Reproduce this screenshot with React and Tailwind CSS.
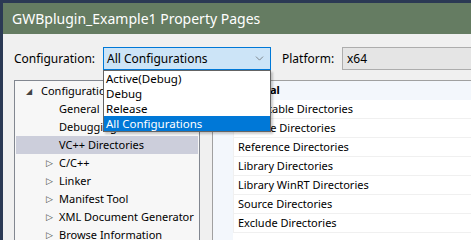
import { ChevronDown } from "lucide-react";

const treeItems = [
  { label: "General" },
  { label: "Debugging" },
  { label: "VC++ Directories", selected: true },
  { label: "C/C++", arrow: true },
  { label: "Linker", arrow: true },
  { label: "Manifest Tool", arrow: true },
  { label: "XML Document Generator", arrow: true },
  { label: "Browse Information", arrow: true },
];

const gridRows = [
  "Executable Directories",
  "Include Directories",
  "Reference Directories",
  "Library Directories",
  "Library WinRT Directories",
  "Source Directories",
  "Exclude Directories",
];

const configOptions = ["Active(Debug)", "Debug", "Release", "All Configurations"];

const App = () => {
  return (
    <div
      className="w-[471px] h-[240px] overflow-hidden flex bg-[#2b3954] text-[11px] text-black"
      style={{ fontFamily: '"Noto Sans", "Open Sans", sans-serif' }}
    >
      <div className="w-[3px] shrink-0" />
      <div className="flex-1 flex flex-col min-w-0">
        <div className="h-[3px] shrink-0" />
        {/* title bar */}
        <div className="h-[31px] shrink-0 bg-[#657c62] flex items-center pl-[9px] text-white text-[14px]">
          GWBplugin_Example1 Property Pages
        </div>

        {/* body */}
        <div className="flex-1 bg-[#f0f0f0] pt-[13px] pl-[11px] flex flex-col">
          <div className="flex items-center h-[23px]">
            <p className="w-[89px] shrink-0 text-[12px]">Configuration:</p>
            <div className="relative w-[168px] shrink-0">
              <div className="h-[23px] border border-[#0078d7] bg-[#cce4f7] flex items-center justify-between pl-[3px] pr-[4px] text-[12px]">
                <span>All Configurations</span>
                <ChevronDown size={13} strokeWidth={1.2} className="text-[#555]" />
              </div>
              <div className="absolute left-0 top-full w-full z-10 bg-white border border-[#646464] shadow-[2px_2px_2px_rgba(0,0,0,0.2)] text-[11.5px]">
                {configOptions.map((o, i) => (
                  <div
                    key={o}
                    className={`h-[15px] leading-[15px] pl-[2px] ${
                      i === configOptions.length - 1 ? "bg-[#0078d7] text-white" : ""
                    }`}
                  >
                    {o}
                  </div>
                ))}
              </div>
            </div>
            <p className="ml-[11px] w-[60px] shrink-0 text-[12px]">Platform:</p>
            <div className="h-[23px] w-[140px] shrink-0 border border-[#adadad] bg-[#e5e5e5] flex items-center pl-[4px] text-[12px]">
              x64
            </div>
          </div>

          <div className="mt-[10px] flex flex-1 min-h-0">
            {/* tree */}
            <div className="w-[186px] shrink-0 border border-[#828790] bg-[#f7f7f7] pt-[1px] px-[1px] overflow-hidden">
              <div className="h-[18px] flex items-center whitespace-nowrap">
                <span className="w-[25px] pl-[10px] text-[8px] text-[#444]">◢</span>
                <span>Configuration Properties</span>
              </div>
              {treeItems.map((t) => (
                <div
                  key={t.label}
                  className={`h-[18px] flex items-center whitespace-nowrap ${
                    t.selected ? "bg-[#cccedb]" : ""
                  }`}
                >
                  <span className="w-[43px] pl-[30px] text-[9px] text-[#444]">
                    {t.arrow ? "▷" : ""}
                  </span>
                  <span>{t.label}</span>
                </div>
              ))}
            </div>

            {/* property grid */}
            <div className="ml-[12px] flex-1 border-l border-t border-[#a0a0a0] bg-white flex">
              <div className="w-[20px] shrink-0 bg-[#f3f7fc]" />
              <div className="flex-1 flex flex-col">
                <div className="h-[19px] flex items-center pl-[4px] font-bold bg-[#f3f7fc]">
                  General
                </div>
                {gridRows.map((r) => (
                  <div
                    key={r}
                    className="h-[19px] flex items-center pl-[4px] border-b border-[#f0f0f0] border-l border-l-[#f0f0f0]"
                  >
                    {r}
                  </div>
                ))}
              </div>
            </div>
          </div>
        </div>
      </div>
    </div>
  );
};

export default App;
